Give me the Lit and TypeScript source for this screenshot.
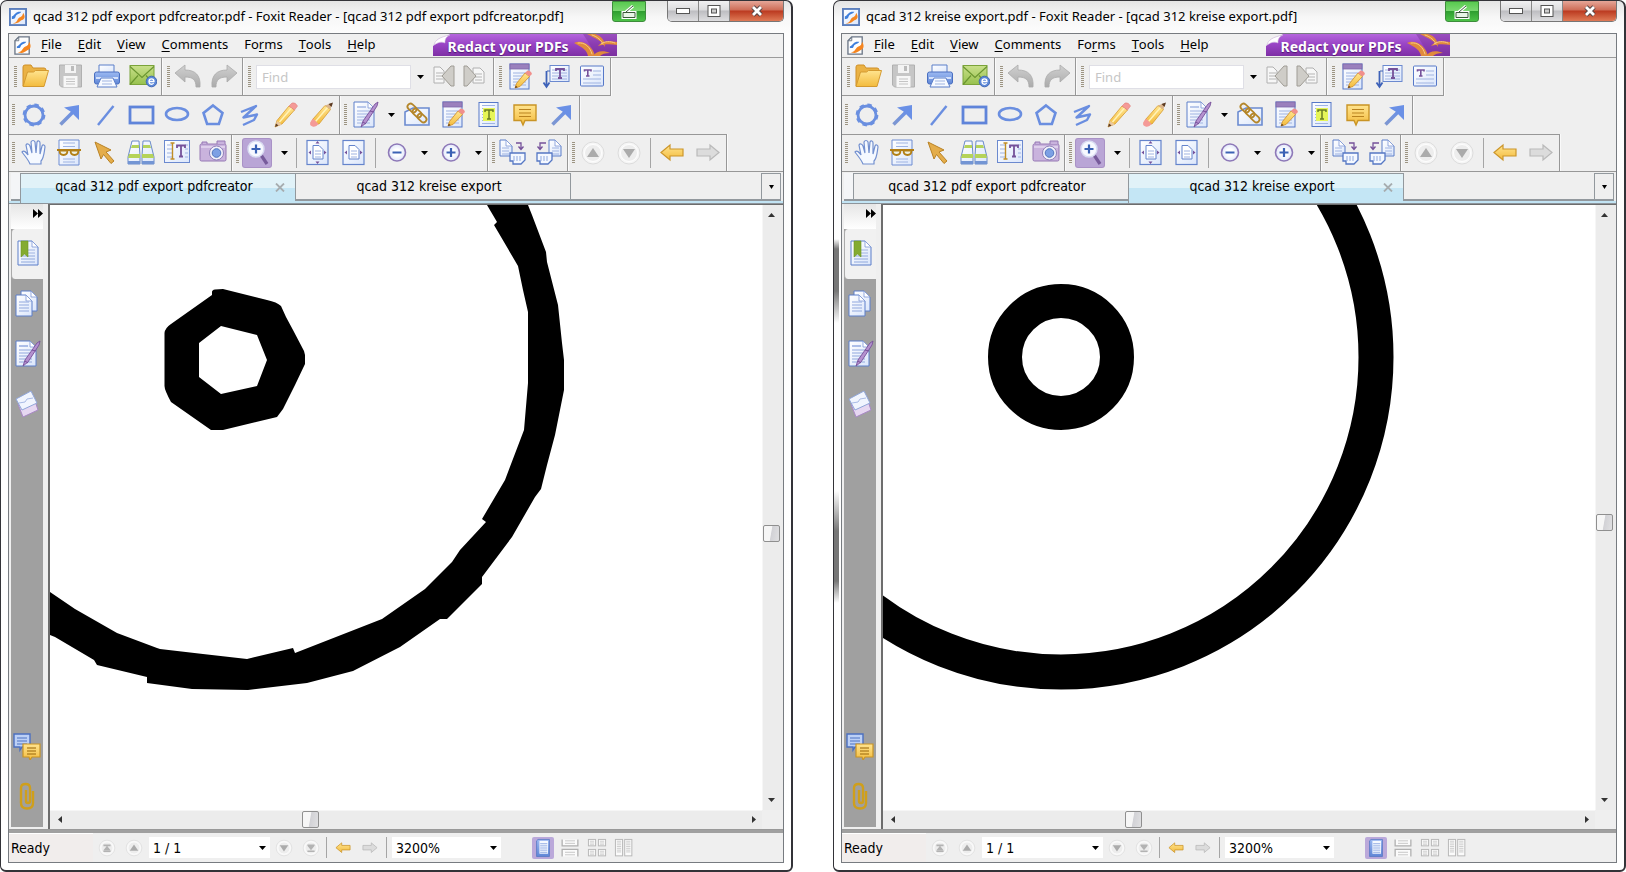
import { LitElement, html, css, svg, nothing, TemplateResult } from "lit";
import { customElement, property } from "lit/decorators.js";
import { classMap } from "lit/directives/class-map.js";
import { styleMap } from "lit/directives/style-map.js";

/* ---------- icon parts ---------- */

const page = (x: number, y: number, w: number, h: number) => svg`
  <path d="M${x} ${y}h${w - 6}l6 6v${h - 6}h${-w}z" fill="url(#paper)" stroke="#5d7fc9"/>
  <path d="M${x + w - 6} ${y}v6h6z" fill="#fff" stroke="#7d98d6" stroke-width=".8"/>`;

const lines = (x: number, y: number, w: number, n: number, step = 3, color = "#9fb4e2") =>
  svg`${Array.from({ length: n }, (_, i) => svg`<path d="M${x} ${y + i * step}h${w}" stroke=${color} stroke-width="1.2"/>`)}`;

const pencil = svg`
  <path d="M4 26l2-6.500L18 5l5.500 4L11 23z" fill="url(#gold)" stroke="#d79a2c" stroke-width=".8"/>
  <path d="M8.500 21L20.500 7" stroke="#fff3b8" stroke-width="1.500"/>
  <path d="M18 5l3-3q3.500-1 5.500 3L23.500 9z" fill="#f49a97" stroke="#e27f7c" stroke-width=".6"/>
  <path d="M4 26l2-6 5 3.500z" fill="#e9c8a0"/><path d="M4 26l1-3.500 2.500 2z" fill="#5b3a22"/>`;

const penOverlay = svg`
  <path d="M10 26l2-6L24 3l3-2-1 4-11 17z" fill="#b491cf" stroke="#77509a" stroke-width=".9"/>
  <path d="M12 21l3 2M19 10l4 1" stroke="#77509a"/>`;

const notePad = svg`
  <rect x="4" y="1" width="19" height="25" fill="url(#paper)" stroke="#5678c8"/>
  <rect x="4" y="1" width="19" height="5" fill="#9a80bd" stroke="#7d66ab" stroke-width=".8"/>
  ${lines(7, 10, 13, 5)}
  <path d="M9 25l1.500-4.500L19 10l4.500 3.500-9.500 10z" fill="url(#gold)" stroke="#cf8d23" stroke-width=".8"/>
  <path d="M19 10l2.500-2.500q3.500 0 4.500 3.500l-2.500 2.500z" fill="#f18f8c"/><path d="M9 25l.8-2.300 1.800 1.500z" fill="#53351f"/>`;

const disc = (glyph: TemplateResult | unknown) => svg`
  <circle cx="14" cy="14" r="11" fill="#f6f6f6" stroke="#dcdcdc"/>
  <circle cx="14" cy="14" r="8.500" fill="#ededed" stroke="#fff"/>${glyph}`;

const lens = (plus: boolean) => svg`
  <circle cx="14" cy="13.500" r="8.500" fill="url(#lens)" stroke="#8e79b8" stroke-width="1.600"/>
  <path d=${plus ? "M9.500 13.500h9M14 9v9" : "M9.500 13.500h9"} stroke="#3b62b5" stroke-width="2.200"/>`;

const miniPage = (x: number, y: number, w: number, h: number) =>
  svg`<rect x=${x} y=${y} width=${w} height=${h} fill="#fbfbfb" stroke="#b9b9b9" stroke-width="1.400"/>${lines(x + 2, y + 2.5, w - 4, Math.floor(h / 3), 2.5, "#c6c6c6")}`;

const icons: Record<string, unknown> = {
  app: svg`<rect x="1" y="1" width="17" height="17" fill="url(#paper)" stroke="#5c7fbd" stroke-width="2"/>
    <path d="M3 9c3-1 3-4 7-5h3c-2 3-5 2-6 5s-2 2-4 3z" fill="#3f7fdc"/>
    <path d="M4 16c5 0 4-4 7-6 2-1 3-1 4-5 3 5 1 7-2 8-3 2-4 4-9 3z" fill="#f5851f"/>`,
  appDoc: svg`<path d="M5 1h11v18H1V5z" fill="#fdfdfd" stroke="#6b7686" stroke-width="1.400"/><path d="M5 1v4H1" fill="none" stroke="#6b7686"/>
    <path d="M3 11c3-1 3-4 7-5h3c-2 3-5 2-6 5s-2 1-4 2z" fill="#3f7fdc"/>
    <path d="M4 17c5 0 4-4 8-6 2-1 3-1 4-5 3 5 1 8-2 9-3 2-5 4-10 2z" fill="#f5851f"/>`,
  open: svg`<path d="M2 23V4q0-2 2-2h6l2 3h11q2 0 2 2v5" fill="#eab245" stroke="#cf8f27"/>
    <path d="M2 23.500L6.500 9l6 0 2-1.500H27.500L23 23.500z" fill="url(#gold)" stroke="#d49a30"/>`,
  save: svg`<path d="M2.500 2h22v22h-20l-2-2z" fill="#c6c6c6" stroke="#b0b0b0"/><rect x="8" y="2" width="11" height="8" fill="#f3f3f3"/>
    <rect x="14" y="3" width="3" height="5" fill="#bbb"/><rect x="6.500" y="13" width="14" height="11" fill="#f7f7f7"/>${lines(9, 16, 9, 3, 2.500, "#c4c4c4")}`,
  print: svg`<path d="M6 10V2h15v8z" fill="url(#paper)" stroke="#5b7ec9"/><rect x="1.500" y="9" width="25" height="12" rx="2" fill="url(#blue)" stroke="#4a6fc0"/>
    <path d="M3 15h22" stroke="#d4e1fb" stroke-width="2"/><path d="M8 15h12l4 9H4z" fill="#f7faff" stroke="#5b7ec9"/>${lines(9, 18, 10, 2, 3)}`,
  mail: svg`<rect x="1" y="2.500" width="24" height="19" fill="url(#green)" stroke="#7ba33a"/><path d="M1 3.500l12 11L25 3.500M1 21.500l8-9M25 21.500l-8-9" fill="none" stroke="#6b9630" stroke-width="1.200"/>
    <circle cx="22.500" cy="18.500" r="5.300" fill="#5c88d8" stroke="#4168b6"/><path d="M20 18.500h5c0-3.500-5-3.500-5 0s3.500 3.200 4.600 1.500" fill="none" stroke="#fff" stroke-width="1.300"/>`,
  undo: svg`<path d="M1 10L11 2v5c10 0 16 5 15 17h-4c0-7-3-10-11-10v5z" fill="url(#grey)" stroke="#ababab" stroke-width=".8"/>`,
  redo: svg`<path d="M27 10L17 2v5C7 7 1 12 2 24h4c0-7 3-10 11-10v5z" fill="url(#grey)" stroke="#ababab" stroke-width=".8"/>`,
  prev: svg`<path d="M4 4h6l4 4v12H4z" fill="#f7f7f7" stroke="#b0b0b0"/>${lines(6, 10, 7, 3, 3, "#b5b5b5")}<path d="M24 3v20h-3L12 13l9-10z" fill="#cfcdc8" stroke="#9f9c95"/>`,
  next: svg`<path d="M13 5h7l4 4v11H13z" fill="#f7f7f7" stroke="#b0b0b0"/>${lines(15, 11, 7, 3, 3, "#b5b5b5")}<path d="M4 3v20h3l9-10L7 3z" fill="#cfcdc8" stroke="#9f9c95"/>`,
  notePad,
  insertText: svg`<rect x="8" y="2.500" width="19" height="16" fill="url(#paper)" stroke="#6b89cf"/>${lines(10, 7, 15, 4)}
    <path d="M14 8V6h8v2M18 6v9M16 15h4" fill="none" stroke="#75519a" stroke-width="1.800"/><path d="M4.500 8v15M1.500 19.500l3 4.500 3-4.500" fill="none" stroke="#3e62b8" stroke-width="1.800"/><path d="M5 8h3" stroke="#3e62b8"/>`,
  textBox: svg`<rect x="2.500" y="3" width="23" height="20" rx="1" fill="url(#paper)" stroke="#5678c8"/>${lines(15, 8, 8, 2, 4)}${lines(5, 16, 18, 2, 4)}
    <path d="M6.500 8.500V7h6.500v1.500M9.800 7v6M8 13h3.500" fill="none" stroke="#75519a" stroke-width="1.600"/>`,
  cloud: svg`<circle cx="15" cy="14" r="9" fill="none" stroke="#6a8fe0" stroke-width="2.800"/><circle cx="15" cy="14" r="10.300" fill="none" stroke="#6a8fe0" stroke-width="2.200" stroke-dasharray="4.500 3.600"/>`,
  arrow: svg`<path d="M5.500 23.500L19 10" stroke="url(#blueLine)" stroke-width="3.600"/><path d="M9 6.500l15-2.500v15l-5.500-5.500-3-3z" fill="#6a90e6"/>`,
  line: svg`<path d="M7 24L22.500 5" stroke="#6a8ee0" stroke-width="2.400"/>`,
  rect: svg`<rect x="3" y="6" width="23" height="16" fill="none" stroke="#5f84da" stroke-width="2.800"/>`,
  ellipse: svg`<ellipse cx="14" cy="13" rx="11" ry="6" fill="none" stroke="#6a8ee0" stroke-width="2.600"/>`,
  polygon: svg`<path d="M14 4.500L23.500 12l-3.600 11H8.100L4.500 12z" fill="none" stroke="#6a8ee0" stroke-width="2.600"/>`,
  polyline: svg`<path d="M6 11L21 5 8.500 16.500 22 13.500 19 19 8 24" fill="none" stroke="#6a8ee0" stroke-width="2.400" stroke-linejoin="round"/>`,
  pencil,
  eraser: svg`<path d="M4 22l2-4L18 4.500l5.500 4L12 23z" fill="url(#gold)" stroke="#d79a2c" stroke-width=".8"/><path d="M8.500 20.500L20.500 6.500" stroke="#fff3b8" stroke-width="1.500"/>
    <path d="M6 17.500l5.500 5.500q-2.500 3.500-6 2.500t-2-4.500z" fill="#f49a97"/><path d="M18 4.500l7-2.500-1.500 6.500z" fill="#d9b48c"/><path d="M21.500 3L26 1.500 24.500 6z" fill="#5b3a22"/>`,
  signDoc: svg`${page(3, 1, 20, 25)}${lines(6, 6, 9, 1, 3, "#7c98d8")}${lines(6, 10, 13, 5)}${penOverlay}`,
  link: svg`<path d="M10 7H26v17H2V11z" fill="url(#paper)" stroke="#6b8bd0" stroke-width="1.600"/>
    <g fill="none" stroke="#b4862a" stroke-width="1.800"><rect x="4" y="4" width="10" height="6" rx="3" transform="rotate(42 9 7)"/><rect x="9" y="9" width="10" height="6" rx="3" transform="rotate(42 14 12)"/><rect x="14" y="14" width="10" height="6" rx="3" transform="rotate(42 19 17)"/></g>`,
  highlight: svg`<rect x="4" y="1.500" width="19" height="24" fill="url(#paper)" stroke="#5678c8"/>${lines(7, 4.500, 13, 7)}<rect x="8" y="7" width="12" height="13" fill="#e6f557"/>
    <path d="M10 11V9h8v2M14 9v9M12 18h4" fill="none" stroke="#687c24" stroke-width="1.500"/>`,
  comment: svg`<path d="M3 4h22v15.500H14l-2 4.500-2-4.500H3z" fill="url(#gold)" stroke="#c99425" stroke-width="1.400"/>${lines(8, 8.500, 12, 3, 3.500, "#b9831f")}`,
  hand: svg`<g transform="translate(2 0)"><path d="M9 25c-2-5-6-9-8-12 2-2 4 0 6 3L5 6c1-2 3-1 4 1l2 7-1-11c1-2 3-2 4 0l1 11 1-11c1-2 3-1 3 1v11l2-8c1-2 3-1 3 1-1 6-1 11-4 14v3z" fill="#f5f9ff" stroke="#7390cf" stroke-width="1.200"/></g>`,
  glasses: svg`<path d="M4 1h20v25H4z" fill="url(#paper)" stroke="#6e8dd2"/>${lines(8, 4, 12, 2, 3.500)}${lines(8, 20, 12, 2)}
    <path d="M2 11h24" stroke="#b27f16" stroke-width="2"/><path d="M4.500 11.500h8q0 4.500-4 4.500t-4-4.500zM15.500 11.500h8q0 4.500-4 4.500t-4-4.500z" fill="#eef0df" stroke="#b27f16" stroke-width="1.800"/>`,
  select: svg`<path d="M4 3l16 8-5 2L23 22l-3 2.500-7.500-9L10 20z" fill="#e4ad4a" stroke="#b98225"/>`,
  find: svg`<g stroke="#6b8bc9"><path d="M5 2h7l1 15v8H1v-7zM16 2h7l4 16v7H15v-8z" fill="url(#paper)"/></g>
    <path d="M5 6h7v3H4zM16 6h7l1 3h-8zM2 15h11v4H1zM15 15h11l1 4H15z" fill="#b5d35a"/><path d="M1 22h12v3H1zM15 22h12v3H15z" fill="#7395d4"/>`,
  selectText: svg`<rect x="1.500" y="1.500" width="25" height="22" fill="url(#paper)" stroke="#6b89cf"/>${lines(4, 6, 5, 4, 4)}${lines(22, 6, 3, 4, 4)}
    <path d="M9.500 4v16M7.500 4h4M7.500 20h4" stroke="#c08d24" stroke-width="1.400"/><path d="M14 9V6.500h8V9M18 6.500v11M16 17.500h4" fill="none" stroke="#75519a" stroke-width="1.800"/>`,
  camera: svg`<rect x="1" y="5" width="26" height="17" rx="1.500" fill="#c9b3dd" stroke="#9678b4"/><path d="M3 5V3h5v2M18 5V2h8v3" fill="#c9b3dd" stroke="#9678b4"/>
    <path d="M2 8h24" stroke="#f4ecfa"/><circle cx="17.500" cy="14" r="7" fill="#f2f2fa" stroke="#8f80b8"/><circle cx="17.500" cy="14" r="4.300" fill="#7ca0e4" stroke="#4f74bd"/>`,
  zoom: svg`<path d="M18 16l6 9" stroke="#775b9b" stroke-width="3.200"/><circle cx="13" cy="10" r="8" fill="#f7f9ff" stroke="#d9dcf2" stroke-width="1.500"/><path d="M8.500 10h9M13 5.500v9" stroke="#3b62b5" stroke-width="2.200"/>`,
  fitPage: svg`<rect x="3" y="1.500" width="21" height="24" fill="url(#paper)" stroke="#6484cc" stroke-width="1.200"/><path d="M9 6.500h6l4 4V20H9z" fill="#fff" stroke="#6484cc"/>${lines(11, 12, 6, 3)}
    <path d="M13.500 2l2 2.500h-4zM13.500 25l2-2.500h-4zM4.500 13.500l2.500-2v4zM22.500 13.500l-2.500-2v4z" fill="#75519a"/>`,
  fitWidth: svg`<rect x="3" y="1.500" width="21" height="24" fill="url(#paper)" stroke="#6484cc" stroke-width="1.200"/><path d="M9 6.500h6l4 4V20H9z" fill="#fff" stroke="#6484cc"/>${lines(11, 12, 6, 3)}
    <path d="M4.500 13.500l2.500-2v4zM22.500 13.500l-2.500-2v4z" fill="#75519a"/>`,
  zoomOut: lens(false),
  zoomIn: lens(true),
  rotLeft: svg`${page(1, 1, 12, 16)}${lines(3, 9, 7, 3)}<path d="M17 4h5v6M19.500 7.500l2.500 3 2.500-3" fill="none" stroke="#75519a" stroke-width="1.300"/>
    <path d="M11 14h15v7l-4 4H14v-3h-3z" fill="#f4f8ff" stroke="#5577c4" stroke-width="1.300"/><path d="M15 17v5M18 17v5M21 17v5" stroke="#8fa8de"/>`,
  rotRight: svg`${page(14, 1, 12, 16)}${lines(17, 9, 7, 3)}<path d="M11 4H5v6M2.500 7.500l2.500 3 2.500-3" fill="none" stroke="#75519a" stroke-width="1.300"/>
    <path d="M2 14h15v7l-4 4H5v-3H2z" fill="#f4f8ff" stroke="#5577c4" stroke-width="1.300"/><path d="M6 17v5M9 17v5M12 17v5" stroke="#8fa8de"/>`,
  up: disc(svg`<path d="M14 9l6 9H8z" fill="#ababab"/>`),
  down: disc(svg`<path d="M14 19l6-9H8z" fill="#ababab"/>`),
  back: svg`<path d="M3 13.500L12 6v4h13v7H12v4z" fill="url(#gold)" stroke="#cc962b" stroke-width="1.200"/>`,
  forward: svg`<path d="M25 13.500L16 6v4H3v7h13v4z" fill="#dcdcdc" stroke="#b9b9b9" stroke-width="1.200"/>`,
  first: disc(svg`<path d="M9 9h10v2.500H9zM14 11l5 6H9zM9 17.500h10v2H9z" fill="#b3b3b3"/>`),
  last: disc(svg`<path d="M9 9h10v2H9zM14 17l5-6H9zM9 17.500h10v2H9z" fill="#b3b3b3"/>`),
  single: svg`<path d="M7 2h16v24H5V4z" fill="url(#blue)" stroke="#4f72c0"/><rect x="9" y="4" width="12" height="18" fill="#f5f9ff"/>${lines(10, 8, 10, 5, 3, "#87a3e0")}`,
  continuous: svg`<path d="M3 2v9h22V2M3 26V16h22v10" fill="#fbfbfb" stroke="#b0b0b0" stroke-width="1.800"/>${lines(7, 4, 14, 2, 3.500, "#c0c0c0")}${lines(7, 20, 14, 2, 3.500, "#c0c0c0")}`,
  facingCont: svg`${miniPage(2, 2, 10, 9)}${miniPage(16, 2, 10, 9)}${miniPage(2, 16, 10, 9)}${miniPage(16, 16, 10, 9)}`,
  facing: svg`${miniPage(2, 2, 10, 23)}${miniPage(15, 2, 10, 23)}`,
  bookmarks: svg`${page(4, 1, 20, 24)}${lines(7, 10, 14, 5)}<path d="M7 1h7v16l-3.500-3L7 17z" fill="#84ab31" stroke="#6d9420" stroke-width=".6"/>`,
  pages: svg`${page(8, 1, 16, 20)}${page(3, 5, 16, 21)}${lines(6, 12, 10, 4)}`,
  layers: svg`<path d="M5 14l16-6 4 12-15 7z" fill="#e6d7f1" stroke="#a988c6"/><path d="M3 9l15-8 6 12-15 7z" fill="#f1f5fe" stroke="#90a6d9"/><path d="M6 13l6-1 2-3 6-1" fill="none" stroke="#a9bbe6"/>`,
  comments: svg`<path d="M1 2h16v13H9l-2 3v-3H1z" fill="#bcd0f6" stroke="#4c70c0" stroke-width="1.400"/>${lines(4, 6, 10, 3, 3, "#5f82cc")}
    <path d="M10 12h17v13h-8l-2 3-1-3h-6z" fill="url(#gold)" stroke="#c99425" stroke-width="1.200"/>${lines(14, 16, 9, 3, 3, "#a87718")}`,
  clip: svg`<path d="M20 9v12q0 5.500-6 5.500T8 21V6q0-4 4.500-4T17 6v13q0 2-2 2t-2-2V8" fill="none" stroke="#cf9f1c" stroke-width="2.400"/>`,
};

const icon = (name: string, size = 28, box = 28) =>
  html`<svg width=${size} height=${size} viewBox="0 0 ${box} ${box}" fill="none" aria-hidden="true">${icons[name]}</svg>`;

type Item = [name: string, label: string] | "split" | "sep" | "search";

const ROWS: { cls: string; groups: Item[][] }[] = [
  {
    cls: "first",
    groups: [
      [["open", "Open"], ["save", "Save"], ["print", "Print"], ["mail", "Email"]],
      [["undo", "Undo"], ["redo", "Redo"]],
      ["search"],
      [["notePad", "Note"], ["insertText", "Typewriter"], ["textBox", "Text box"]],
    ],
  },
  {
    cls: "second",
    groups: [
      [["cloud", "Cloud"], ["arrow", "Arrow"], ["line", "Line"], ["rect", "Rectangle"], ["ellipse", "Ellipse"], ["polygon", "Polygon"], ["polyline", "Polyline"], ["pencil", "Pencil"], ["eraser", "Eraser"]],
      [["signDoc", "Sign"], "split", ["link", "Link"], ["notePad", "Note"], ["highlight", "Highlight"], ["comment", "Comment"], ["arrow", "Arrow"]],
    ],
  },
  {
    cls: "third",
    groups: [
      [["hand", "Hand"], ["glasses", "Read mode"], ["select", "Select annotation"], ["find", "Search"], ["selectText", "Select text"], ["camera", "Snapshot"]],
      [["zoom", "Marquee zoom"], "split", "sep", ["fitPage", "Fit page"], ["fitWidth", "Fit width"], "sep", ["zoomOut", "Zoom out"], "split", ["zoomIn", "Zoom in"], "split"],
      [["rotLeft", "Rotate left"], ["rotRight", "Rotate right"]],
      [["up", "Previous page"], ["down", "Next page"], "sep", ["back", "Previous view"], ["forward", "Next view"]],
    ],
  },
];

/* [before accelerator, accelerator, after accelerator] */
const MENU = [["", "F", "ile"], ["", "E", "dit"], ["", "V", "iew"], ["", "C", "omments"], ["Fo", "r", "ms"], ["", "T", "ools"], ["", "H", "elp"]];
const TABS = ["qcad 312 pdf export pdfcreator", "qcad 312 kreise export"];

const caret = html`<svg class="caret" width="7" height="4" viewBox="0 0 7 4" aria-hidden="true"><path d="M0 0h7L3.500 4z" fill="#000"/></svg>`;

@customElement("reader-window")
export class ReaderWindow extends LitElement {
  @property() file = "";
  @property({ type: Number }) active = 0;
  @property({ type: Number }) scrollX_ = 0;
  @property({ type: Number }) scrollY_ = 0;
  @property({ attribute: false }) drawing: unknown = nothing;

  static styles = css`
    * { box-sizing: border-box; }
    :host {
      display: flex; flex-direction: column; flex: 1 1 0; min-width: 0;
      border: solid #333338; border-width: 1px 2px 2px 1px; border-radius: 7px 7px 6px 6px;
      padding: 0 7px 7px; overflow: hidden; color: #000;
      background: linear-gradient(#e4e4e4, #f7f7f7 16px, #fdfdfd 33px, #fff);
      font: 13px/16px "Noto Sans", sans-serif;
    }
    :host([shaded]) {
      background:
        linear-gradient(transparent 238px, #777 248px, #777 290px, transparent 322px, transparent 490px, #777 530px, #777 580px, transparent 602px) 0 0 / 5px 100% no-repeat,
        linear-gradient(#e4e4e4, #f7f7f7 16px, #fdfdfd 33px, #fff);
    }
    button, input, select { font: inherit; color: inherit; border: 0; padding: 0; margin: 0; background: none; border-radius: 0; }
    button { display: flex; align-items: center; justify-content: center; }
    svg { display: block; flex: none; }
    .defs { position: absolute; width: 0; height: 0; }

    .title { display: flex; align-items: flex-start; height: 32px; flex: none; }
    .title .logo { margin: 7px 6px 0 1px; }
    h1 { font: inherit; margin: 7px 0 0; flex: 1; white-space: nowrap; overflow: hidden; }
    .share { width: 34px; height: 21px; background: linear-gradient(#58c94f, #7ad870 45%, #2f9f30 50%, #4cc247); border: 1px solid #3d8d3b; border-radius: 0 0 3px 3px; margin-right: 21px; }
    .sys { display: flex; height: 21px; border: 1px solid #777; border-top: 0; border-radius: 0 0 5px 5px; overflow: hidden; }
    .sys button { width: 31px; background: linear-gradient(#f1f1f2, #dcdcde 45%, #bdbdc1 50%, #dedee0); border-right: 1px solid #888; }
    .sys .close { width: 53px; border: 0; background: linear-gradient(#e5a698, #cf6d57 45%, #bb3a20 50%, #df7a56); }

    .frame { flex: 1; min-height: 0; display: flex; flex-direction: column; border: 1px solid #777b80; background: #efefef; }
    .menu { display: flex; align-items: center; height: 24px; flex: none; padding-left: 5px; gap: 16px; border-bottom: 1px solid #9b9b9b; background: #f0f0f0; }
    .menu .doc { margin-right: -8px; }
    .menu button { padding-bottom: 3px; }
    .menu u { text-underline-offset: 2px; }
    .banner { display: block; margin-left: 41px; height: 22px; align-self: flex-start; position: relative; width: 184px; color: #fff; text-decoration: none; font-weight: bold; background: linear-gradient(#b566dd, #9a45c6 45%, #7e2fa5); }
    .banner svg { position: absolute; inset: 0; }
    .banner span { position: absolute; left: 15px; top: 4px; font: bold 14px/18px "Noto Sans", sans-serif; white-space: nowrap; text-shadow: 0 1px 1px #4c1470; }

    .row { display: flex; height: 38px; flex: none; }
    .group { display: flex; align-items: center; padding-left: 4px; border-right: 1px solid #979797; box-shadow: 1px 0 #fafafa; }
    .group:first-child { padding-left: 3px; }
    .first .group, .first .group:first-child { padding-left: 5px; border-bottom: 1px solid #979797; }
    .third .group { border-top: 1px solid #979797; }
    .third { border-bottom: 1px solid #979797; }
    .grip { width: 3px; height: 22px; background: repeating-linear-gradient(#9c9482 0 1px, transparent 1px 2px); }
    .tool { width: 36px; height: 34px; }
    .narrow { width: 30px; }
    .pressed > svg { box-shadow: 0 0 0 1px #a992c6; background: #b9a5d6; border-radius: 2px; }
    .split { width: 18px; height: 34px; }
    .second .split { width: 16px; }
    .sep { width: 1px; height: 30px; background: #a5a5a5; margin: 0 3px; flex: none; }
    .search { width: 155px; height: 24px; margin-left: 5px; padding: 0 5px; background: #fff; border: 1px solid #dfdfe6; }
    .search::placeholder { color: #c6c6c6; opacity: 1; }
    .end { width: 4px; }

    .tabs { display: flex; align-items: stretch; height: 32px; flex: none; padding: 1px 2px 2px; background: linear-gradient(#efefef 29px, #c2e4f4 29px); border-bottom: 1px solid #8e959b; }
    .stub, .rest { border-bottom: 2px solid #92989d; }
    .stub { width: 9px; background: #f4f5f7; }
    .rest { flex: 1; border-left: 1px solid #92989d; }
    .tab { width: 275px; flex: 0 1 auto; display: flex; align-items: center; border: 1px solid #92989d; border-width: 1px 0 2px 1px; position: relative; }
    .tab .name { flex: 1; height: 100%; padding: 0 8px 2px 0; white-space: nowrap; font-family: "DejaVu Sans Condensed", "Noto Sans", sans-serif; font-size: 14px; }
    .tab.on { border-bottom: 0; margin-bottom: -2px; padding-bottom: 4px; background: linear-gradient(#e1f2f8 14px, #c4e6f5 14px); }
    .tab .x { position: absolute; right: 9px; top: 7px; width: 12px; height: 12px; }
    .more { width: 20px; border: 1px solid #92989d; border-bottom-width: 2px; }

    .body { flex: 1; min-height: 0; display: flex; border-bottom: 1px solid #999; }
    .side { width: 34px; padding-left: 2px; display: flex; flex-direction: column; flex: none; }
    .chev { height: 25px; flex: none; background: linear-gradient(#e6e6e6, #fff); justify-content: flex-end; padding-bottom: 6px; }
    .panels { flex: 1; display: flex; flex-direction: column; background: #a0a0a0; padding-bottom: 6px; margin-bottom: 2px; }
    .panels button { height: 50px; flex: none; }
    .panels .on { background: #f1f1f1; border-radius: 4px 0 0 4px; border-left: 1px solid #aaa; }
    .grow { flex: 1; }
    .view { flex: 1; min-width: 0; margin-left: 5px; border: solid #6d6d6d; border-width: 1px 0 0 2px; display: grid; grid-template: minmax(0, 1fr) 19px / minmax(0, 1fr) 21px; background: #efefef; }
    .page { background: #fff; width: 100%; height: 100%; min-height: 0; }
    .bar { display: flex; background: #ececec; }
    .v { flex-direction: column; border-left: 1px solid #f6f6f6; padding: 2px 3px 2px 0; }
    .h { border-top: 1px solid #f6f6f6; padding-left: 2px; }
    .bar button { width: 17px; height: 17px; flex: none; }
    .thumb { width: 17px; height: 17px; flex: none; border: 1px solid #8f8f8f; border-radius: 2px; background: linear-gradient(100deg, #f6f6f6 45%, #d2d2d6 50%, #e0e0e2); }

    .status { display: flex; align-items: center; height: 32px; flex: none; border-top: 3px solid #a0a0a0; background: #efefef; font-family: "DejaVu Sans Condensed", "Noto Sans", sans-serif; font-size: 14px; }
    .ready { width: 84px; height: 100%; padding: 6px 2px 0; background: #f1edec; border-top: 1px solid #fff; }
    .mini { width: 27px; height: 26px; }
    .combo { position: relative; display: flex; margin-left: 2px; }
    .combo select { appearance: none; width: 121px; height: 21px; padding: 0 4px; background: #fff; }
    .combo.zoom select { width: 109px; }
    .combo.zoom { margin: 0 26px 0 0; }
    .combo .caret { position: absolute; right: 4px; top: 9px; pointer-events: none; }
    .status .sep { height: 21px; margin: 0 2px; }
    .status .sep.wide { margin: 0 5px 0 3px; }
    .mini.pressed { background: #bba9da; width: 22px; height: 22px; border-radius: 2px; margin: 0 2px 0 5px; }
    .mini.pressed > svg { box-shadow: none; background: none; }
  `;

  private item(it: Item) {
    if (it === "split") return html`<button class="split" aria-label="More options">${caret}</button>`;
    if (it === "sep") return html`<span class="sep"></span>`;
    if (it === "search")
      return html`<input class="search" type="text" placeholder="Find" aria-label="Find" />
        <button class="split" aria-label="Find options">${caret}</button>
        <button class="tool narrow" aria-label="Find previous">${icon("prev")}</button>
        <button class="tool narrow" aria-label="Find next">${icon("next")}</button><span class="end"></span>`;
    return html`<button class=${classMap({ tool: true, pressed: it[0] === "zoom" })} aria-label=${it[1]}>${icon(it[0])}</button>`;
  }

  private mini(name: string, label: string, size = 20) {
    return html`<button class=${classMap({ mini: true, pressed: name === "single" })} aria-label=${label}>${icon(name, size)}</button>`;
  }

  private bar(dir: "h" | "v", pos: number) {
    const glyphs = dir === "v" ? ["M1 6l3.500-4L8 6z", "M1 3l3.500 4L8 3z"] : ["M6 1L2 4.500 6 8z", "M3 1l4 3.500L3 8z"];
    const end = (d: string, label: string) =>
      html`<button aria-label=${label}><svg width="9" height="9" viewBox="0 0 9 9"><path d=${d} fill="#333"/></svg></button>`;
    return html`<div class="bar ${dir}">
      ${end(glyphs[0], "Scroll back")}
      <span style=${styleMap({ flexGrow: String(pos) })}></span><span class="thumb"></span><span style=${styleMap({ flexGrow: String(1 - pos) })}></span>
      ${end(glyphs[1], "Scroll on")}
    </div>`;
  }

  render() {
    return html`
      <svg class="defs" aria-hidden="true"><defs>
        <linearGradient id="paper" x1="0" y1="0" x2="1" y2="1"><stop offset="0" stop-color="#fff"/><stop offset="1" stop-color="#dbe6fb"/></linearGradient>
        <linearGradient id="gold" x1="0" y1="0" x2="0" y2="1"><stop offset="0" stop-color="#ffe48f"/><stop offset="1" stop-color="#f3bb3d"/></linearGradient>
        <linearGradient id="blue" x1="0" y1="0" x2="0" y2="1"><stop offset="0" stop-color="#9dbaf2"/><stop offset="1" stop-color="#5f86d6"/></linearGradient>
        <linearGradient id="green" x1="0" y1="0" x2="0" y2="1"><stop offset="0" stop-color="#c9e08b"/><stop offset="1" stop-color="#97c14e"/></linearGradient>
        <linearGradient id="grey" x1="0" y1="0" x2="0" y2="1"><stop offset="0" stop-color="#d0d0d0"/><stop offset="1" stop-color="#ababab"/></linearGradient>
        <linearGradient id="blueLine" x1="0" y1="1" x2="1" y2="0"><stop offset="0" stop-color="#7e97d0"/><stop offset="1" stop-color="#6a90e6"/></linearGradient>
        <radialGradient id="lens"><stop offset=".4" stop-color="#fff"/><stop offset="1" stop-color="#dfe6fa"/></radialGradient>
      </defs></svg>

      <header class="title">
        <span class="logo">${icon("app", 18, 19)}</span>
        <h1>${this.file} - Foxit Reader - [${this.file}]</h1>
        <button class="share" aria-label="Share"><svg width="18" height="14" viewBox="0 0 18 14"><path d="M3 7.500h12v5H3zM6 7l7-6" fill="none" stroke="#fff" stroke-width="3"/><path d="M3 7.500h12v5H3zM6 7l7-6" fill="#e8f5e6" stroke="#3c5a3a"/></svg></button>
        <div class="sys">
          <button aria-label="Minimize"><svg width="14" height="6" viewBox="0 0 14 6"><rect x=".5" y=".5" width="13" height="5" fill="#fff" stroke="#555"/></svg></button>
          <button aria-label="Maximize"><svg width="14" height="12" viewBox="0 0 14 12"><rect x="1" y=".5" width="12" height="11" fill="#fff" stroke="#555"/><rect x="4.500" y="4" width="5" height="4" fill="#ccc" stroke="#555"/></svg></button>
          <button class="close" aria-label="Close"><svg width="14" height="12" viewBox="0 0 14 12"><path d="M3 2l8 8M11 2l-8 8" stroke="#544" stroke-width="4.600"/><path d="M3 2l8 8M11 2l-8 8" stroke="#fff" stroke-width="2.800"/></svg></button>
        </div>
      </header>

      <main class="frame">
        <nav class="menu">
          <span class="doc">${icon("appDoc", 19, 20)}</span>
          ${MENU.map(([a, key, b]) => html`<button>${a}<u>${key}</u>${b}</button>`)}
          <a class="banner" href="#redact">
            <svg width="184" height="22" viewBox="0 0 184 22"><path d="M0 0H17L0 12z" fill="#f0f0f0"/><path d="M1 11c1-5 6-8 16-10-4 2-5 4-5 8-4-2-8 0-11 2z" fill="#fff" stroke="#c9b0d8" stroke-width=".6"/>
              <path d="M150 0h34v22h-20z" fill="#7a3298" opacity=".45"/>
              <g fill="#e08a3c"><path d="M141 9c8-4 19 3 21 13h-7c-1-6-6-9-14-13z"/><path d="M154 0h8c7 2 10 7 10 13-3-6-10-9-18-13z"/><path d="M165 12c5-6 12-5 19-4v3c-7-1-12-1-19 1z"/><path d="M160 22c3-5 10-6 17-3-5 0-8 1-10 3z"/></g>
              <g fill="none" stroke="#f8c882" stroke-linecap="round"><path d="M145 9c7-1 12 4 14 11"/><path d="M159 1c6 2 9 5 11 9M168 10c4-3 9-3 14-1"/></g></svg>
            <span>Redact your PDFs</span>
          </a>
        </nav>

        ${ROWS.map((r) => html`<div class="row ${r.cls}">
          ${r.groups.map((g) => html`<div class="group"><span class="grip"></span>${g.map((it) => this.item(it))}</div>`)}
        </div>`)}

        <div class="tabs">
          <span class="stub"></span>
          ${TABS.map((t, i) => html`<div class=${classMap({ tab: true, on: i === this.active })}>
            <button class="name">${t}</button>
            ${i === this.active
              ? html`<button class="x" aria-label="Close tab"><svg width="10" height="9" viewBox="0 0 10 9"><path d="M1 .5l8 8M9 .5l-8 8" stroke="#a7adb0" stroke-width="1.800"/></svg></button>`
              : nothing}
          </div>`)}
          <span class="rest"></span>
          <button class="more" aria-label="All tabs"><svg width="5" height="4" viewBox="0 0 5 4"><path d="M0 0h5L2.500 4z"/></svg></button>
        </div>

        <div class="body">
          <aside class="side">
            <button class="chev" aria-label="Expand panel"><svg width="10" height="9" viewBox="0 0 10 9"><path d="M0 0l5 4.500V0l5 4.500L5 9V4.500L0 9z"/></svg></button>
            <div class="panels">
              <button class="on" aria-label="Bookmarks">${icon("bookmarks")}</button>
              <button aria-label="Pages">${icon("pages")}</button>
              <button aria-label="Signatures">${icon("signDoc")}</button>
              <button aria-label="Layers">${icon("layers")}</button>
              <span class="grow"></span>
              <button aria-label="Comments">${icon("comments")}</button>
              <button aria-label="Attachments">${icon("clip")}</button>
            </div>
          </aside>
          <section class="view">
            <svg class="page" role="img" aria-label=${this.file}><g transform="translate(-50 -205)">${this.drawing}</g></svg>
            ${this.bar("v", this.scrollY_)} ${this.bar("h", this.scrollX_)}
          </section>
        </div>

        <footer class="status">
          <span class="ready">Ready</span>
          ${this.mini("first", "First page")} ${this.mini("up", "Previous page")}
          <span class="combo"><select aria-label="Page"><option>1 / 1</option></select>${caret}</span>
          ${this.mini("down", "Next page")} ${this.mini("last", "Last page")}
          <span class="sep"></span>
          ${this.mini("back", "Previous view", 18)} ${this.mini("forward", "Next view", 18)}
          <span class="sep wide"></span>
          <span class="combo zoom"><select aria-label="Zoom"><option>3200%</option></select>${caret}</span>
          ${this.mini("single", "Single page")} ${this.mini("continuous", "Continuous")} ${this.mini("facingCont", "Continuous facing")} ${this.mini("facing", "Facing")}
        </footer>
      </main>
    `;
  }
}

const coarse = svg`
  <path fill="#000" fill-rule="evenodd" d="M212 292Q212 290 215 289.500L223 289 267 300Q277 302 281 306L286 317 293 330 304 351 305 355V364L295 385 283 409 277 417 223 430H211L171 402Q164.500 390 164.500 386V333Q165 328 171 324L212 295z
    M221 326L257 335 267 360 257 386 221 394 199 377V343z"/>
  <path fill="#000" d="M528 205L532 215 546 252 547 262 558 305 562 343 564 360V390L555 435 547 465 541 489 535 497 512 537 482 577V584L447 619H440L400 647 353 671 307 683 248 690 192 689 147 683V677L97 665 94 660 55 637 50 635V592L75 609 117 633 157 648 160 649 203 654 247 659 293 648 295 653 382 619 425 589 452 562 460 550 486 522 482 519 505 480 524 430 528 383V312L523 290 518 266 494 225 497 222 487 205z"/>`;

const smooth = svg`
  <circle cx="228" cy="357" r="56" fill="none" stroke="#000" stroke-width="34"/>
  <circle cx="228" cy="357" r="315" fill="none" stroke="#000" stroke-width="35"/>`;

@customElement("app-root")
export class AppRoot extends LitElement {
  static styles = css`
    :host { display: flex; gap: 40px; height: 100vh; min-height: 600px; background: #fff; }
  `;

  render() {
    return html`
      <reader-window file="qcad 312 pdf export pdfcreator.pdf" .active=${0} .scrollX_=${0.354} .scrollY_=${0.548} .drawing=${coarse}></reader-window>
      <reader-window shaded file="qcad 312 kreise export.pdf" .active=${1} .scrollX_=${0.338} .scrollY_=${0.528} .drawing=${smooth}></reader-window>
    `;
  }
}
